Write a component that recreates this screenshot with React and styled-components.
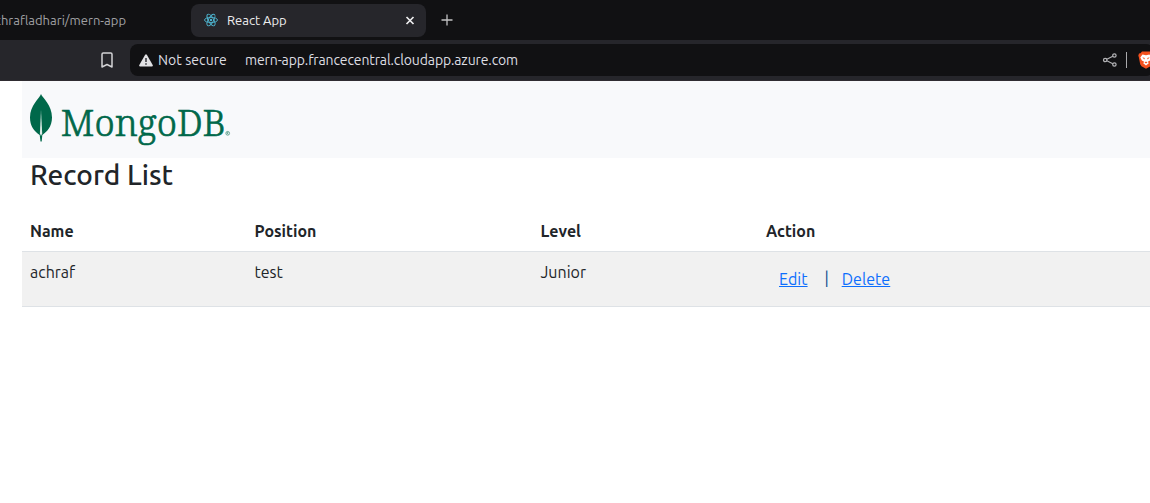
import React from "react";
import styled, { createGlobalStyle } from "styled-components";

const GlobalStyle = createGlobalStyle`
  * { box-sizing: border-box; }
  body {
    margin: 0;
    background: #fff;
    color: #212529;
    font-family: Ubuntu, "Noto Sans", "Open Sans", sans-serif;
    font-size: 16px;
    line-height: 24px;
    overflow: hidden;
  }
`;

const Window = styled.div`
  height: 503px;
  overflow: hidden;
`;

const TabStrip = styled.div`
  display: flex;
  align-items: center;
  height: 40px;
  background: #111113;
`;

const BackgroundTab = styled.div`
  display: flex;
  justify-content: flex-end;
  width: 126px;
  margin-right: 65px;
  overflow: hidden;
  white-space: nowrap;
  color: #a0a0a3;
  font-size: 13px;
`;

const ActiveTab = styled.div`
  display: flex;
  align-items: center;
  width: 235px;
  height: 33px;
  padding: 0 11px 0 13px;
  border-radius: 8px;
  background: #26262b;
  color: #ededee;
  font-size: 13px;

  svg { flex: none; }
`;

const TabTitle = styled.span`
  flex: 1;
  margin-left: 9px;
`;

const NewTab = styled.div`
  display: flex;
  margin-left: 15px;
`;

const Toolbar = styled.div`
  display: flex;
  align-items: center;
  height: 41px;
  padding: 4px 0 4px 101px;
  background: #26262b;
  border-bottom: 1px solid #2f2c31;

  > svg { flex: none; }
`;

const AddressBar = styled.div`
  display: flex;
  flex: none;
  align-items: center;
  width: 1024px;
  height: 32px;
  margin-left: 17px;
  padding-left: 9px;
  border-radius: 8px;
  background: #111113;
  color: #dedee2;
  font-size: 14px;
  white-space: nowrap;

  svg { flex: none; }
`;

const Security = styled.span`
  width: 92px;
  padding-left: 5px;
  letter-spacing: 0.07px;
`;

const Url = styled.span`
  flex: 1;
  letter-spacing: -0.115px;
`;

const Divider = styled.span`
  width: 1px;
  height: 16px;
  margin: 0 11px 0 9px;
  background: #aaaaad;
`;

const Page = styled.main`
  margin-left: 22px;
`;

const Navbar = styled.nav`
  display: flex;
  height: 77px;
  padding: 12px 7px;
  background: #f8f9fb;
`;

const Heading = styled.h3`
  margin: 0;
  padding: 0 8px;
  height: 53px;
  font-size: 28px;
  font-weight: 480;
  line-height: 34px;
`;

const Table = styled.div`
  width: 1140px;
`;

const Row = styled.div`
  display: grid;
  grid-template-columns: 224.5px 286px 225.5px 1fr;
  height: ${(p) => (p.$head ? "41px" : "55px")};
  background: ${(p) => (p.$head ? "#fff" : "#f1f1f1")};
  border-bottom: 1px solid #dee2e6;
  font-weight: ${(p) => (p.$head ? 700 : 375)};
`;

const Cell = styled.div`
  padding: 8px;
`;

const Actions = styled(Cell)`
  display: flex;
  padding: 15px 8px 0 21px;
`;

const Link = styled.a`
  color: #0d6efd;
  text-decoration: underline;
  letter-spacing: 0.05px;
`;

const Bar = styled.span`
  margin: -1px 13px 0 16.8px;
  color: #0b4a8c;
`;

function ReactLogo() {
  return (
    <svg width="14" height="14" viewBox="0 0 14 14" fill="none" stroke="#4eb5d0" strokeWidth="0.9">
      <ellipse cx="7" cy="7" rx="6.5" ry="2.6" />
      <ellipse cx="7" cy="7" rx="6.5" ry="2.6" transform="rotate(60 7 7)" />
      <ellipse cx="7" cy="7" rx="6.5" ry="2.6" transform="rotate(120 7 7)" />
      <circle cx="7" cy="7" r="1.2" fill="#4eb5d0" stroke="none" />
    </svg>
  );
}

function CloseIcon() {
  return (
    <svg width="10" height="10" viewBox="0 0 10 10" stroke="#ededee" strokeWidth="1.7">
      <path d="M1.5 2l7 7M8.5 2l-7 7" />
    </svg>
  );
}

function PlusIcon() {
  return (
    <svg width="12" height="12" viewBox="0 0 12 12" stroke="#c2c2c4" strokeWidth="1.3">
      <path d="M6 .5v11M.5 6h11" />
    </svg>
  );
}

function BookmarkIcon() {
  return (
    <svg width="12" height="16" viewBox="0 0 12 16" fill="none" stroke="#d2d2d5" strokeWidth="1.5" strokeLinejoin="round">
      <path d="M1 2.2Q1 1 2.2 1H9.8Q11 1 11 2.2V15L6 12.500L1 15Z" />
    </svg>
  );
}

function WarningIcon() {
  return (
    <svg width="14" height="13" viewBox="0 0 14 13">
      <path d="M6 1Q7-.4 8 1L13.7 11Q14.2 12.500 12.800 12.500H1.200Q-.2 12.500.3 11Z" fill="#e2e2e5" />
      <path d="M7 4v4M7 9.300v1.500" stroke="#333338" strokeWidth="1.5" />
    </svg>
  );
}

function ShareIcon() {
  return (
    <svg width="15" height="14" viewBox="0 0 15 14" fill="none" stroke="#b4b4b7" strokeWidth="1.2">
      <circle cx="3.200" cy="7" r="1.7" />
      <circle cx="12.400" cy="2.500" r="1.700" />
      <circle cx="12.400" cy="11.500" r="1.700" />
      <path d="M4.800 6.200l6-2.900M4.800 7.800l6 2.900" />
    </svg>
  );
}

function BraveIcon() {
  return (
    <svg width="16" height="18" viewBox="0 0 16 18">
      <path d="M4 .5h8l1.500 1.700 1.500.2.700 2.400-.5 1.300-1.400 7.200-1.300 2L8 17.700l-4.500-2.400-1.300-2L.8 6.100.3 4.800 1 2.400l1.500-.2Z" fill="#f4511e" />
      <path d="M4.500 3.500 8 4.200l3.500-.7 2.200 3-1.600 3-2.300 1.200 1 1.500L8 14.400l-2.800-2.200 1-1.500-2.300-1.200-1.600-3Z" fill="#fff" />
      <path d="M4.300 6.300l2.500.6-.5 1.500ZM11.700 6.300l-2.500.6.5 1.500ZM6.500 11.500 8 10.600l1.500.9L8 12.400Z" fill="#f4511e" />
    </svg>
  );
}

function MongoLogo() {
  return (
    <svg width="204" height="54" viewBox="0 0 204 54" fill="#00684a">
      <path d="M12 1C13.500 5 23 11.500 23 24.500C23 34 17.500 39 13.300 42L12.700 48.500H11.500L10.700 42C5 38 1 33 1 24.500C1 12 10.700 5.500 12 1Z" />
      <path d="M12 17L13.200 40.500L12 43L10.900 40.500Z" fill="#dcebe6" />
      <text x="31.8" y="42.700" fontFamily="Noto Serif, Liberation Serif, serif" fontWeight="300" fontSize="36" textLength="165" lengthAdjust="spacingAndGlyphs" stroke="#00684a" strokeWidth="0.700">MongoDB</text>
      <circle cx="198.700" cy="40.300" r="1.900" fill="none" stroke="#00684a" strokeWidth="0.500" />
      <path d="M198.100 41.400v-2.200h.7q.7.600 0 1.100h-.6m.5 0 .6 1.100" fill="none" stroke="#00684a" strokeWidth="0.400" />
    </svg>
  );
}

export default function App() {
  return (
    <Window>
      <GlobalStyle />
      <TabStrip>
        <BackgroundTab>chrafladhari/mern-app</BackgroundTab>
        <ActiveTab>
          <ReactLogo />
          <TabTitle>React App</TabTitle>
          <CloseIcon />
        </ActiveTab>
        <NewTab><PlusIcon /></NewTab>
      </TabStrip>
      <Toolbar>
        <BookmarkIcon />
        <AddressBar>
          <WarningIcon />
          <Security>Not secure</Security>
          <Url>mern-app.francecentral.cloudapp.azure.com</Url>
          <ShareIcon />
          <Divider />
          <BraveIcon />
        </AddressBar>
      </Toolbar>
      <Page>
        <Navbar><MongoLogo /></Navbar>
        <Heading>Record List</Heading>
        <Table>
          <Row $head>
            <Cell>Name</Cell>
            <Cell>Position</Cell>
            <Cell>Level</Cell>
            <Cell>Action</Cell>
          </Row>
          <Row>
            <Cell>achraf</Cell>
            <Cell>test</Cell>
            <Cell>Junior</Cell>
            <Actions>
              <Link>Edit</Link>
              <Bar>|</Bar>
              <Link>Delete</Link>
            </Actions>
          </Row>
        </Table>
      </Page>
    </Window>
  );
}
